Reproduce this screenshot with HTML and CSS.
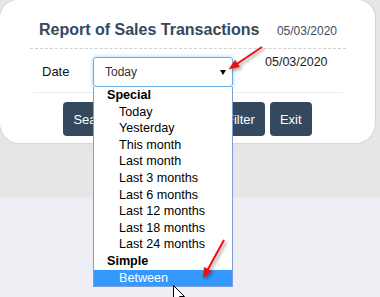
FILE: index.html
```html
<!DOCTYPE html>
<html>
<head>
<meta charset="utf-8">
<link rel="stylesheet" href="styles.css">
</head>
<body>
<div class="top">
  <div class="card">
    <div class="head">
      <h1 class="title">Report of Sales Transactions</h1>
      <span class="hdate">05/03/2020</span>
    </div>
    <div class="row">
      <span class="lbl">Date</span>
      <div class="selwrap">
        <div class="select"><span>Today</span><span class="caret"></span></div>
        <ul class="list">
          <li class="grp">Special</li>
          <li class="opt">Today</li>
          <li class="opt">Yesterday</li>
          <li class="opt">This month</li>
          <li class="opt">Last month</li>
          <li class="opt">Last 3 months</li>
          <li class="opt">Last 6 months</li>
          <li class="opt">Last 12 months</li>
          <li class="opt">Last 18 months</li>
          <li class="opt">Last 24 months</li>
          <li class="grp">Simple</li>
          <li class="opt sel">Between</li>
        </ul>
      </div>
      <span class="rdate">05/03/2020</span>
    </div>
    <div class="btns">
      <button class="btn">Search</button>
      <button class="btn">Print</button>
      <button class="btn">Clear Filter</button>
      <button class="btn">Exit</button>
    </div>
  </div>
</div>
<svg class="annot" width="380" height="297" viewBox="0 0 380 297">
  <defs>
    <filter id="sh" x="-50%" y="-50%" width="200%" height="200%">
      <feDropShadow dx="2" dy="2" stdDeviation="1.5" flood-color="#000" flood-opacity="0.35"/>
    </filter>
  </defs>
  <g filter="url(#sh)" fill="#ee1111" stroke="#ee1111">
    <line x1="262" y1="47" x2="236" y2="64.5" stroke-width="2"/>
    <polygon points="229,69 239.5,66.8 235.1,60.2" stroke-width="0.5"/>
    <line x1="224" y1="240" x2="207" y2="271" stroke-width="2"/>
    <polygon points="203,278 211.3,271.1 204.3,267.3" stroke-width="0.5"/>
  </g>
  <path d="M173.5 285.5 L173.5 301.5 L177.5 297.5 L180.5 304.5 L182.5 303.5 L179.5 296.5 L184.5 296.5 Z" fill="#fff" stroke="#000" stroke-width="1"/>
</svg>
</body>
</html>
```

FILE: styles.css
```css
html, body {
  margin: 0;
  padding: 0;
}
body {
  background: #eceef3;
  font-family: "Liberation Sans", Arial, sans-serif;
  width: 380px;
  height: 297px;
  overflow: hidden;
  position: relative;
}
.top {
  background: #e6e6e6;
  height: 197px;
}
.card {
  width: 375px;
  height: 143px;
  box-sizing: border-box;
  background: #fff;
  border-radius: 0 0 20px 20px;
  border-top-left-radius: 18px;
  border-top-right-radius: 18px;
  box-shadow: 0 0 1px 1px #d6d6d6;
}
.head {
  margin: 0 29px 0 30px;
  padding: 20px 9px 8px 9px;
  border-bottom: 1px dashed #d0d0d0;
  display: flex;
  justify-content: space-between;
  align-items: baseline;
}
.title {
  margin: 0;
  font-size: 16px;
  line-height: 20px;
  font-weight: bold;
  color: #34495e;
}
.hdate {
  font-size: 12px;
  color: #3d4a5a;
}
.row {
  margin: 0 32px 0 33px;
  padding: 8px 0 5px 9px;
  border-bottom: 1px solid #ececec;
  display: flex;
  align-items: flex-start;
}
.lbl {
  width: 51px;
  font-size: 13px;
  line-height: 30px;
  color: #111;
}
.selwrap {
  position: relative;
  width: 140px;
}
.select {
  height: 30px;
  box-sizing: border-box;
  border: 1px solid #66afe9;
  border-radius: 3px;
  box-shadow: 0 0 4px rgba(102, 175, 233, 0.6);
  display: flex;
  align-items: center;
  justify-content: space-between;
  padding: 0 6px 0 11px;
  font-size: 12px;
  color: #333;
}
.caret {
  width: 0;
  height: 0;
  border-left: 3px solid transparent;
  border-right: 3px solid transparent;
  border-top: 5px solid #000;
  margin-top: 1px;
}
.list {
  position: absolute;
  top: 30px;
  left: 0;
  width: 140px;
  box-sizing: border-box;
  margin: 0;
  padding: 0;
  list-style: none;
  background: #fff;
  border: 1px solid #7d9ed6;
  border-top: none;
  z-index: 2;
}
.list li {
  font-size: 12.6px;
  line-height: 16.6px;
  color: #000;
  white-space: nowrap;
}
.grp {
  font-weight: bold;
  padding-left: 13px;
}
.opt {
  padding-left: 25px;
}
.opt.sel {
  background: #3399ff;
  color: #fff;
}
.rdate {
  margin-left: 32px;
  margin-top: -2px;
  font-size: 12.5px;
  line-height: 15px;
  color: #222;
}
.btns {
  display: flex;
  justify-content: center;
  gap: 5px;
  padding: 9px 0 7px;
}
.btn {
  height: 34px;
  padding: 0 10px;
  border: none;
  border-radius: 4px;
  background: #34495e;
  color: #fff;
  font-family: "Liberation Sans", Arial, sans-serif;
  font-size: 13px;
}
.annot {
  position: absolute;
  left: 0;
  top: 0;
  z-index: 5;
  pointer-events: none;
}
```
